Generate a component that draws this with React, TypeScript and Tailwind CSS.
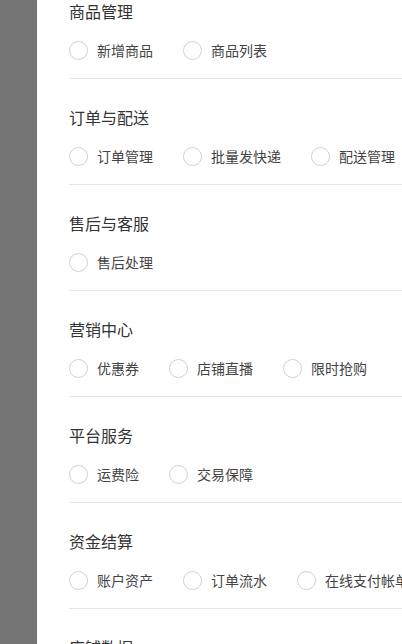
const sections: { title: string; items: string[] }[] = [
  { title: '商品管理', items: ['新增商品', '商品列表'] },
  { title: '订单与配送', items: ['订单管理', '批量发快递', '配送管理'] },
  { title: '售后与客服', items: ['售后处理'] },
  { title: '营销中心', items: ['优惠券', '店铺直播', '限时抢购'] },
  { title: '平台服务', items: ['运费险', '交易保障'] },
  { title: '资金结算', items: ['账户资产', '订单流水', '在线支付帐单'] },
  { title: '店铺数据', items: ['流量分析', '商品分析'] },
];

function Radio({ label }: { label: string }) {
  return (
    <label className="mr-[30px] flex shrink-0 items-center">
      <span className="h-[19px] w-[19px] rounded-full border border-[#cfd1d6] bg-white" />
      <span className="ml-[9px] text-[14px] leading-5 text-[#444]">{label}</span>
    </label>
  );
}

export default function App() {
  return (
    <div
      className="flex h-[644px] w-[402px] overflow-hidden bg-[#757575]"
      style={{ fontFamily: '"Noto Sans CJK SC", "Noto Sans", sans-serif' }}
    >
      <div className="w-[37px] shrink-0" />
      <div className="min-w-0 flex-1 bg-white pl-8">
        <div className="-mt-px">
          {sections.map((section) => (
            <section key={section.title} className="mb-[26px] w-[600px] border-b border-[#e6e6e6] pb-[18px]">
              <h3 className="text-[16px] leading-6 text-[#333]">{section.title}</h3>
              <div className="mt-[17px] flex h-5 items-center whitespace-nowrap">
                {section.items.map((item) => (
                  <Radio key={item} label={item} />
                ))}
              </div>
            </section>
          ))}
        </div>
      </div>
    </div>
  );
}
